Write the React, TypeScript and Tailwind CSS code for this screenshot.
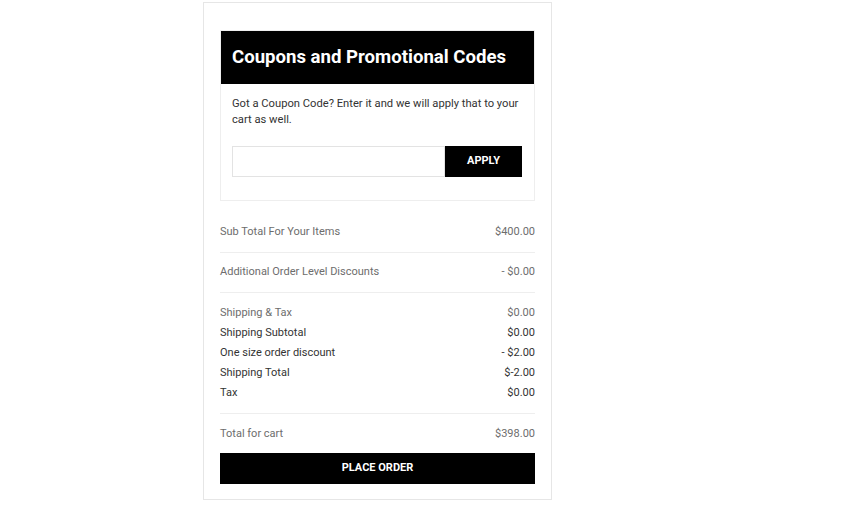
import React from 'react';

type Row = { label: string; value: string; muted?: boolean };

const shippingRows: Row[] = [
  { label: 'Shipping & Tax', value: '$0.00', muted: true },
  { label: 'Shipping Subtotal', value: '$0.00' },
  { label: 'One size order discount', value: '- $2.00' },
  { label: 'Shipping Total', value: '$-2.00' },
  { label: 'Tax', value: '$0.00' },
];

const SummaryRow: React.FC<{ row: Row }> = ({ row }) => (
  <div className={`flex justify-between leading-[20px] ${row.muted ? 'text-[#6d6d6d]' : 'text-[#333]'}`}>
    <span>{row.label}</span>
    <span>{row.value}</span>
  </div>
);

export default function App() {
  return (
    <div className="min-h-screen bg-white font-['Roboto','Liberation_Sans',sans-serif] text-[11px]">
      <div className="ml-[203px] mt-[2px] w-[349px] border border-[#e6e6e6] px-4 pt-[27px] pb-[15px]">
        {/* Coupon box */}
        <div className="border border-[#eeeeee]">
          <div className="bg-black h-[53px] flex items-center px-[11px]">
            <h2 className="text-white font-bold text-[18.6px] leading-none">
              Coupons and Promotional Codes
            </h2>
          </div>
          <div className="px-[11px] pt-[12px] pb-[23px]">
            <p className="text-[#333] text-[11.2px] leading-[16px]">
              Got a Coupon Code? Enter it and we will apply that to your cart as well.
            </p>
            <div className="flex mt-[18px] mr-[1px]">
              <input
                type="text"
                className="h-[31px] w-[213px] border border-[#e3e3e3] outline-none px-2"
              />
              <button className="h-[31px] w-[77px] bg-black text-white font-bold text-[11px]">
                APPLY
              </button>
            </div>
          </div>
        </div>

        {/* Totals */}
        <div className="mt-[12px] pt-[10px] pb-[11px] border-b border-[#eeeeee]">
          <div className="flex justify-between leading-[18px] text-[#6d6d6d]">
            <span>Sub Total For Your Items</span>
            <span>$400.00</span>
          </div>
        </div>
        <div className="pt-[10px] pb-[11px] border-b border-[#eeeeee]">
          <div className="flex justify-between leading-[18px] text-[#6d6d6d]">
            <span>Additional Order Level Discounts</span>
            <span>- $0.00</span>
          </div>
        </div>
        <div className="pt-[10px] pb-[10px] border-b border-[#eeeeee]">
          {shippingRows.map((r) => (
            <SummaryRow key={r.label} row={r} />
          ))}
        </div>
        <div className="pt-[10px]">
          <div className="flex justify-between leading-[20px] text-[#6d6d6d]">
            <span>Total for cart</span>
            <span>$398.00</span>
          </div>
        </div>
        <button className="mt-[9px] w-full h-[31px] bg-black text-white font-bold text-[11px]">
          PLACE ORDER
        </button>
      </div>
    </div>
  );
}
